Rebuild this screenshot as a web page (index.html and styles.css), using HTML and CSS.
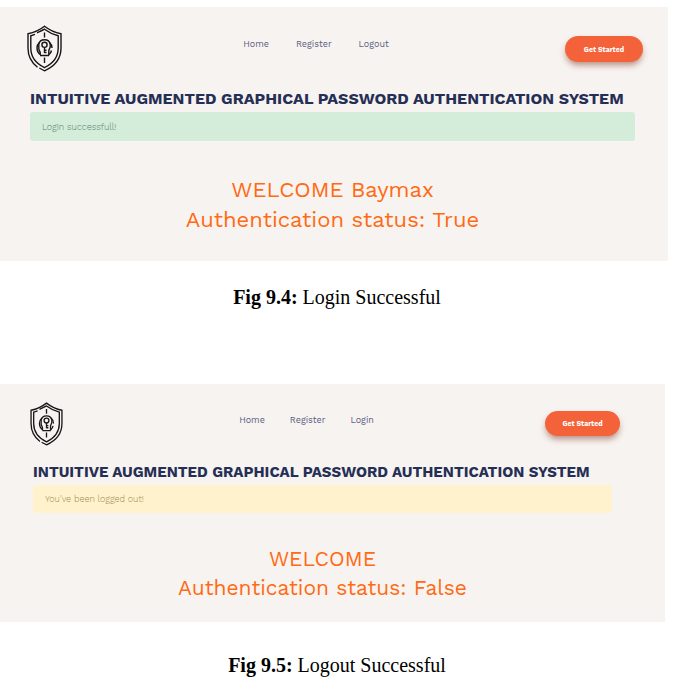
FILE: index.html
```html
<!DOCTYPE html>
<html lang="en">
<head>
<meta charset="utf-8">
<meta name="viewport" content="width=device-width, initial-scale=1">
<title>Authentication results</title>
<link rel="stylesheet" href="styles.css">
</head>
<body>
<svg class="sprite" aria-hidden="true">
  <symbol id="shield" viewBox="0 0 35 47">
    <g fill="none" stroke="#161616" stroke-width="1.4">
      <path d="M10.500 42.200Q1 35 1 23V8.800Q10 7 17.500 1.200Q25 7 34 8.800V23Q34 38.500 17.500 45.800L12.300 43"/>
      <path d="M10 7.800L12 6.900Q15 5.600 17.500 4.200Q24 9 31.200 10.800V23Q31.200 36 17.500 42.600Q3.800 36 3.800 23V10.800L8 9.400"/>
      <path d="M17.500 7.500V12.500M17.500 32.500V38"/>
      <path d="M13 30.500H22M13.200 30V27.500L11.800 24V19.500Q12.500 14.800 17.500 14.800Q22.500 14.800 23.200 19.500V22L21.800 25.500V30.500"/>
      <path d="M12.600 17.200Q10 19.500 10 23Q10 27 13 29.500M22.400 17.200Q25 19.500 25 23M24.500 25.500Q24 28 22 29.500"/>
      <circle cx="17.500" cy="19.800" r="2.600"/>
      <path d="M17.500 22.400V28M17.500 25.200H19.500M17.500 27.500H19.500"/>
    </g>
  </symbol>
</svg>

<main>
  <figure class="figure">
    <section class="screen">
      <header class="topbar">
        <svg class="logo" role="img" aria-label="Shield logo"><use href="#shield"/></svg>
        <nav class="nav">
          <a href="#">Home</a>
          <a href="#">Register</a>
          <a href="#">Logout</a>
        </nav>
        <button class="cta" type="button">Get Started</button>
      </header>
      <div class="content">
        <h1 class="title">INTUITIVE AUGMENTED GRAPHICAL PASSWORD AUTHENTICATION SYSTEM</h1>
        <div class="alert success" role="status">Login successfull!</div>
      </div>
      <p class="welcome">WELCOME Baymax<br>Authentication status: True</p>
    </section>
    <figcaption class="caption"><b>Fig 9.4:</b> Login Successful</figcaption>
  </figure>

  <figure class="figure small">
    <section class="screen">
      <header class="topbar">
        <svg class="logo" role="img" aria-label="Shield logo"><use href="#shield"/></svg>
        <nav class="nav">
          <a href="#">Home</a>
          <a href="#">Register</a>
          <a href="#">Login</a>
        </nav>
        <button class="cta" type="button">Get Started</button>
      </header>
      <div class="content">
        <h1 class="title">INTUITIVE AUGMENTED GRAPHICAL PASSWORD AUTHENTICATION SYSTEM</h1>
        <div class="alert warning" role="status">You've been logged out!</div>
      </div>
      <p class="welcome">WELCOME<br>Authentication status: False</p>
    </section>
    <figcaption class="caption"><b>Fig 9.5:</b> Logout Successful</figcaption>
  </figure>
</main>
</body>
</html>
```
FILE: styles.css
```css
* {
  box-sizing: border-box;
}

body {
  margin: 0;
  background: #fff;
}

.sprite {
  position: absolute;
  width: 0;
  height: 0;
}

.figure {
  margin: 0;
  padding-top: 7px;
}

.screen {
  margin-right: 8px;
  padding: 18px 25px 26px 27px;
  background: #f7f3f0;
  font-family: "Work Sans", Inter, "Liberation Sans", sans-serif;
}

.topbar {
  display: flex;
  justify-content: space-between;
  align-items: flex-start;
}

.logo {
  width: 35px;
  height: 47px;
}

.nav {
  display: flex;
  gap: 27px;
  padding: 13px 0 0 5px;
}

.nav a {
  color: #5b6080;
  font-size: 9px;
  line-height: 12px;
  text-decoration: none;
}

.cta {
  width: 78px;
  height: 26px;
  margin-top: 11px;
  padding: 0;
  border: 0;
  border-radius: 13px;
  background: #f4623a;
  box-shadow: 0 4px 6px -1px rgba(120, 40, 20, 0.5);
  color: #fff;
  font-family: inherit;
  font-size: 7px;
  font-weight: 700;
}

.content {
  margin: 17px 8px 0 3px;
}

.title {
  margin: 0 0 3px;
  color: #252f56;
  font-size: 16px;
  font-weight: 700;
  line-height: 20px;
  white-space: nowrap;
}

.alert {
  padding: 1px 12px 0;
  border-radius: 3px;
  font-size: 9px;
  font-weight: 300;
  line-height: 28px;
}

.success {
  background: #d4edda;
  color: #53826a;
}

.warning {
  background: #fff2cd;
  color: #9c8a52;
}

.welcome {
  margin: 34px 5px 0 0;
  color: #ff6a13;
  font-size: 22px;
  line-height: 30px;
  text-align: center;
}

.caption {
  margin-top: 24px;
  padding-right: 2px;
  color: #000;
  font-family: "Liberation Serif", serif;
  font-size: 20px;
  line-height: 24px;
  text-align: center;
}

.small {
  padding-top: 75px;
}

.small .screen {
  margin-right: 11px;
  padding: 18px 45px 20px 30px;
}

.small .logo {
  width: 33px;
  height: 44px;
}

.small .nav {
  gap: 25px;
  padding: 12px 0 0 5px;
}

.small .cta {
  width: 75px;
  height: 25px;
  margin-top: 9px;
}

.small .content {
  margin-top: 16px;
}

.small .title {
  font-size: 15px;
}

.small .alert {
  line-height: 27px;
}

.small .welcome {
  margin-top: 31px;
  font-size: 21px;
  line-height: 29px;
}

.small .caption {
  margin-top: 31px;
}
```
